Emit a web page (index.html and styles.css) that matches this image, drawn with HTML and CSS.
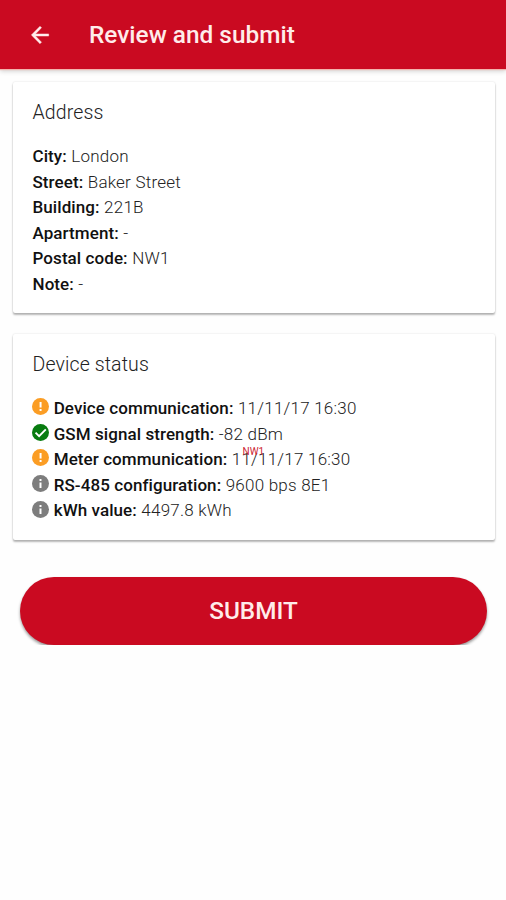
FILE: index.html
```html
<!DOCTYPE html>
<html lang="en">
<head>
<meta charset="utf-8">
<title>Review and submit</title>
<link rel="stylesheet" href="styles.css">
</head>
<body>
<svg class="defs" width="0" height="0" aria-hidden="true">
  <symbol id="warn" viewBox="0 0 24 24"><circle cx="12" cy="12" r="12" fill="#fb9d24"/><path d="M10.7 5.5h2.8v8h-2.8zM10.7 15.7h2.8v2.8h-2.8z" fill="#fff"/></symbol>
  <symbol id="ok" viewBox="0 0 24 24"><circle cx="12" cy="12" r="12" fill="#087c10"/><path d="M5 12.2l5 5L19.5 7.6" fill="none" stroke="#fff" stroke-width="2.7"/></symbol>
  <symbol id="info" viewBox="0 0 24 24"><circle cx="12" cy="12" r="12" fill="#7d7d7d"/><path d="M10.6 5.5h2.8v2.8h-2.8zM10.6 10.5h2.8v8h-2.8z" fill="#fff"/></symbol>
</svg>
<header class="bar">
  <svg class="back" viewBox="0 0 24 24"><path d="M20 11H7.83l5.59-5.59L12 4l-8 8 8 8 1.41-1.41L7.83 13H20v-2z"/></svg>
  <h1 class="title">Review and submit</h1>
</header>
<main class="content">
  <section class="card address">
    <h2 class="heading">Address</h2>
    <div class="row"><b>City:</b> London</div>
    <div class="row"><b>Street:</b> Baker Street</div>
    <div class="row"><b>Building:</b> 221B</div>
    <div class="row"><b>Apartment:</b> -</div>
    <div class="row"><b>Postal code:</b> NW1</div>
    <div class="row"><b>Note:</b> -</div>
  </section>
  <section class="card status">
    <h2 class="heading">Device status</h2>
    <div class="row"><svg class="icon"><use href="#warn"/></svg><b>Device communication:</b> 11/11/17 16:30</div>
    <div class="row"><svg class="icon"><use href="#ok"/></svg><b>GSM signal strength:</b> -82 dBm</div>
    <div class="row"><svg class="icon"><use href="#warn"/></svg><b>Meter communication:</b> 11/11/17 16:30<span class="tag">NW1</span></div>
    <div class="row"><svg class="icon"><use href="#info"/></svg><b>RS-485 configuration:</b> 9600 bps 8E1</div>
    <div class="row"><svg class="icon"><use href="#info"/></svg><b>kWh value:</b> 4497.8 kWh</div>
  </section>
  <button class="submit">SUBMIT</button>
</main>
</body>
</html>
```
FILE: styles.css
```css
* { box-sizing: border-box; }
body { margin: 0; background: #fefefe; color: #222; font-family: Roboto, sans-serif; }
.defs { position: absolute; }
.bar { display: flex; align-items: center; height: 69px; padding-left: 27px; background: #ca0a21; box-shadow: 0 1px 1px #f3b5ae, 0 2px 5px rgba(0,0,0,.2); }
.back { width: 26px; height: 26px; fill: #ffeceb; stroke: #ffeceb; stroke-width: .4; }
.title { margin: 1px 0 0 36px; color: #ffecea; font-size: 24.4px; font-weight: 500; line-height: 30px; white-space: nowrap; }
.content { display: flex; flex-direction: column; padding: 13px 11px 0 13px; }
.card { padding: 18px 20px 0 19.5px; background: #fff; border-radius: 2px; box-shadow: 0 2px 2px rgba(0,0,0,.28), 0 0 2px rgba(0,0,0,.14); }
.address { height: 231px; }
.status { height: 206px; margin-top: 21px; }
.heading { margin: 0 0 18px; font-size: 19.5px; font-weight: 300; line-height: 26px; letter-spacing: .12px; }
.row { position: relative; display: flex; align-items: center; gap: 4.5px; height: 25.6px; font-size: 17px; font-weight: 300; line-height: 25.6px; letter-spacing: .22px; white-space: nowrap; }
.row b { font-weight: 500; color: #111; letter-spacing: .08px; }
.icon { flex: none; width: 17px; height: 17px; margin: -4px .2px 0 -.5px; }
.tag { position: absolute; left: 210px; top: -.5px; color: #cc2430; font-size: 10px; font-weight: 400; line-height: 10px; letter-spacing: 0; }
.submit { width: 467px; height: 68px; margin: 36.5px 0 0 7px; padding: 0; border: 0; border-radius: 34px; background: #ca0a21; color: #ffecea; box-shadow: 0 2px 3px rgba(0,0,0,.4); font: 500 24.3px/68px Roboto, sans-serif; }
```
